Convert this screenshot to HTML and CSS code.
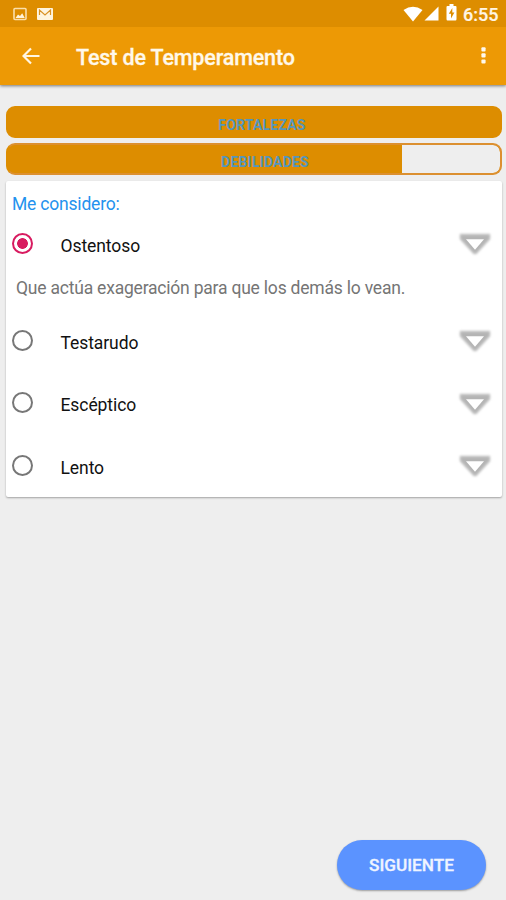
FILE: index.html
```html
<!DOCTYPE html>
<html lang="es">
<head>
<meta charset="utf-8">
<title>Test de Temperamento</title>
<link rel="stylesheet" href="styles.css">
</head>
<body>
<svg class="defs" width="0" height="0" aria-hidden="true">
  <defs>
    <filter id="soft" x="-20%" y="-20%" width="140%" height="140%"><feGaussianBlur stdDeviation="0.9"/></filter>
    <symbol id="arrow" viewBox="0 0 36 26">
      <path d="M3.5 3.5H32.5V8L19 22.5H17L3.5 8Z" fill="#b4b4b4" stroke="#c4c4c4" stroke-width="1.6" stroke-linejoin="round" filter="url(#soft)"/>
      <path d="M9 8.2H27L18 18.8Z" fill="#fff"/>
    </symbol>
  </defs>
</svg>
<header class="top">
  <div class="status">
    <svg class="s-pic" viewBox="0 0 14 14"><rect x="1" y="1.5" width="12" height="11" rx="1" fill="none" stroke="#fbdfaa" stroke-width="1.6"/><path d="M2.5 11L5 7.5L7 9L9.2 6.3L11.8 11Z" fill="#fff3d9"/></svg>
    <svg class="s-mail" viewBox="0 0 16 14"><rect x="0" y="1" width="16" height="12" rx="1" fill="#fff5df"/><path d="M2.5 8V3L8 8L13.5 3V8" fill="none" stroke="#d99226" stroke-width="1.2"/></svg>
    <span class="gap"></span>
    <svg class="s-wifi" viewBox="0 0 20 16"><path d="M.5 4Q10-2.5 19.5 4L10 15.5Z" fill="#fff"/></svg>
    <svg class="s-cell" viewBox="0 0 15 15"><path d="M14.5 .5V14.5H.5Z" fill="#fff"/></svg>
    <svg class="s-batt" viewBox="0 0 11 17"><path d="M3.5 0H7.5V2H9.5Q10.5 2 10.5 3V15Q10.5 16.5 9.5 16.5H1.5Q.5 16.5 .5 15V3Q.5 2 1.5 2H3.5Z" fill="#fff"/><path d="M6.3 4L2.8 9.7H5V14.5L8.4 8.5H6.3Z" fill="#dd8d00"/></svg>
    <span class="clock">6:55</span>
  </div>
  <div class="bar">
    <svg class="back" viewBox="0 0 18 18"><path d="M17.5 9H2M9 1.5L1.5 9L9 16.5" fill="none" stroke="#fff6e4" stroke-width="2.2"/></svg>
    <h1 class="title">Test de Temperamento</h1>
    <svg class="more" viewBox="0 0 5 17"><g fill="#fff9ed"><rect x=".4" y=".2" width="4.2" height="4.2" rx="1"/><rect x=".4" y="6.3" width="4.2" height="4.2" rx="1"/><rect x=".4" y="12.4" width="4.2" height="4.2" rx="1"/></g></svg>
  </div>
</header>
<main class="main">
  <div class="progress"><span>FORTALEZAS</span></div>
  <div class="progress partial"><span>DEBILIDADES</span></div>
  <section class="card">
    <p class="question">Me considero:</p>
    <div class="row"><i class="radio on"></i><span class="label">Ostentoso</span><svg class="drop"><use href="#arrow"/></svg></div>
    <p class="desc">Que actúa exageración para que los demás lo vean.</p>
    <div class="row"><i class="radio"></i><span class="label">Testarudo</span><svg class="drop"><use href="#arrow"/></svg></div>
    <div class="row"><i class="radio"></i><span class="label">Escéptico</span><svg class="drop"><use href="#arrow"/></svg></div>
    <div class="row"><i class="radio"></i><span class="label">Lento</span><svg class="drop"><use href="#arrow"/></svg></div>
  </section>
</main>
<footer class="foot"><button class="next">SIGUIENTE</button></footer>
</body>
</html>
```
FILE: styles.css
```css
* { box-sizing: border-box; }
body {
  margin: 0;
  height: 900px;
  display: flex;
  flex-direction: column;
  overflow: hidden;
  background: #eee;
  font-family: Roboto, "Liberation Sans", sans-serif;
}
h1, p { margin: 0; }
svg { display: block; flex: none; }
.defs { position: absolute; }
.top { background: #ed9905; height: 85px; box-shadow: 0 1px 3px rgba(0,0,0,.5); }
.status {
  height: 27px;
  padding: 0 8px 0 13px;
  display: flex;
  align-items: center;
  background: #dd8d00;
}
.s-pic { width: 14px; height: 14px; }
.s-mail { width: 16px; height: 14px; margin-left: 10px; }
.gap { flex: 1; }
.s-wifi { width: 20px; height: 16px; }
.s-cell { width: 15px; height: 15px; margin-left: 1px; }
.s-batt { width: 11px; height: 17px; margin: 0 6px 2px 7px; }
.clock { width: 35px; font-size: 18px; font-weight: 500; -webkit-text-stroke: .2px #fff5e4; color: #fff5e4; line-height: 27px; white-space: nowrap; padding-top: 1px; }
.bar { height: 58px; display: flex; align-items: center; padding: 0 20px 0 22px; }
.back { width: 18px; height: 18px; }
.title { flex: 1; margin-left: 36px; font-size: 21.5px; font-weight: 500; letter-spacing: -.15px; -webkit-text-stroke: .3px #fff8ea; color: #fff8ea; padding-top: 2px; }
.more { width: 5px; height: 17px; margin-top: -1px; }
.main { padding: 21px 4px 0 6px; }
.progress {
  height: 32px;
  margin-bottom: 5px;
  border: 2px solid #dd8d00;
  border-radius: 9px;
  background: #dd8d00;
  display: flex;
  justify-content: center;
  align-items: center;
  padding: 5px 0 0 16px;
  font-size: 14px;
  font-weight: 700;
  letter-spacing: .2px;
  color: #5596bd;
}
.partial {
  background: linear-gradient(to right, #dd8d00 394px, #eee 394px) padding-box, #dd8d00;
  border-color: #dc9030;
  border-left-color: #dd8d00;
  padding-left: 22px;
}
.card {
  height: 316px;
  margin-top: 6px;
  background: #fff;
  border-radius: 2px;
  box-shadow: 0 1px 2px rgba(0,0,0,.32);
}
.question { height: 31px; line-height: 46px; padding-left: 6px; font-size: 17.5px; letter-spacing: -.2px; color: #2492ee; }
.row { height: 62.5px; display: flex; align-items: center; padding: 0 9px 0 6px; }
.radio { flex: none; width: 21px; height: 21px; border: 2px solid #777; border-radius: 50%; }
.on { border-color: #d81b60; background: radial-gradient(circle, #d81b60 5px, transparent 5.7px); }
.label { flex: 1; margin-left: 27.5px; padding-top: 5px; font-size: 17.5px; letter-spacing: -.08px; color: #111; }
.drop { width: 36px; height: 26px; margin-top: 2px; }
.desc { height: 34.5px; padding-left: 10px; line-height: 26px; font-size: 17.5px; letter-spacing: -.21px; color: #757575; white-space: nowrap; }
.foot { margin-top: auto; display: flex; justify-content: flex-end; padding: 0 20px 10px 0; }
.next {
  width: 149px;
  height: 50px;
  border: 0;
  border-radius: 25px;
  background: #5b93ff;
  box-shadow: 0 1px 2px rgba(0,0,0,.35);
  color: #eff4ff;
  font: 500 17.2px Roboto, "Liberation Sans", sans-serif;
  -webkit-text-stroke: .3px #eff4ff;
  padding: 0;
}
```
